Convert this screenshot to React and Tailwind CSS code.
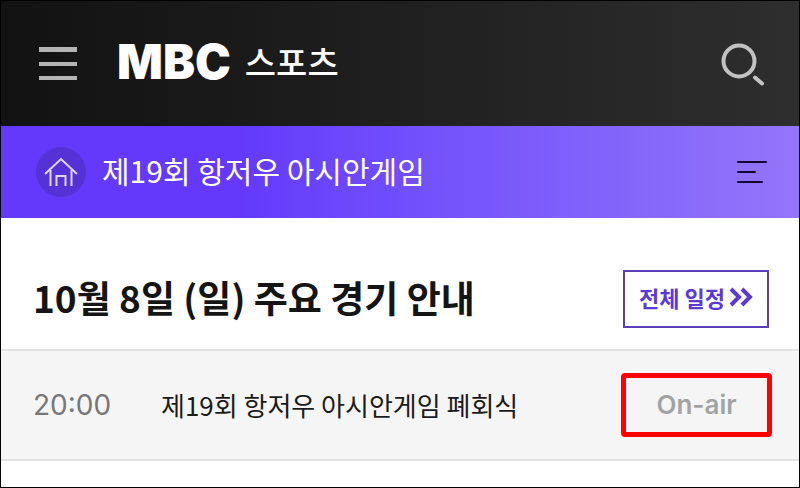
const matches = [
  { time: '20:00', title: '제19회 항저우 아시안게임 폐회식', status: 'On-air' },
]

function Header() {
  return (
    <header className="flex h-[125px] items-center bg-linear-to-r from-[#121212] to-[#2e2e2e] pl-[38px] pr-[34px]">
      <button type="button" aria-label="메뉴" className="flex flex-col gap-[10px]">
        <span className="h-[5px] w-[38px] bg-[#b4b4b4]" />
        <span className="h-[4px] w-[38px] bg-[#b4b4b4]" />
        <span className="h-[4px] w-[38px] bg-[#b4b4b4]" />
      </button>
      <a href="#" className="ml-10 flex items-center gap-[14px] pb-1 text-white">
        <span className="font-[Inter,sans-serif] text-[48px] leading-[48px] font-black">MBC</span>
        <span className="text-[34px] leading-[48px] font-medium">스포츠</span>
      </a>
      <button type="button" aria-label="검색" className="ml-auto">
        <svg width="44" height="44" viewBox="0 0 44 44" fill="none" stroke="#c2c2c2" strokeLinecap="round">
          <circle cx="18" cy="19" r="15.500" strokeWidth="4" />
          <path d="M34 35.500 L41 41.500" strokeWidth="4" />
        </svg>
      </button>
    </header>
  )
}

function EventBar() {
  return (
    <nav className="flex h-[92px] items-center bg-linear-to-r from-[#6439fb] from-30% to-[#9475fa] pl-[35px] pr-8">
      <a href="#" aria-label="홈" className="flex size-[50px] items-center justify-center rounded-full bg-[#5631d6]">
        <svg width="34" height="32" viewBox="0 0 34 32" fill="none" stroke="#e0d6fb" strokeWidth="2">
          <path d="M1 18 L17 3 L33 18" />
          <path d="M6.500 14 V30 M27.500 14 V30" />
          <path d="M12.500 30 V20 H21.500 V30" />
        </svg>
      </a>
      <h1 className="ml-4 pb-1 text-[30px] leading-[44px] text-white">제19회 항저우 아시안게임</h1>
      <button type="button" aria-label="목록" className="ml-auto">
        <svg width="30" height="24" viewBox="0 0 30 24" stroke="#12082f" strokeWidth="2" strokeLinecap="round">
          <path d="M1 2 H29 M1 12 H18 M1 22 H25" />
        </svg>
      </button>
    </nav>
  )
}

export default function App() {
  return (
    <div className="min-h-screen border border-black bg-white font-['Noto_Sans_CJK_KR',sans-serif]">
      <Header />
      <EventBar />
      <main>
        <div className="flex h-[131px] items-center justify-between pl-8 pr-[30px] pt-[30px]">
          <h2 className="pb-1 text-[37px] leading-[52px] font-bold text-[#151515]">10월 8일 (일) 주요 경기 안내</h2>
          <button
            type="button"
            className="flex h-[58px] w-[146px] items-center justify-center gap-1 border-2 border-[#5a3fb8] pb-1 text-[22px] leading-8 font-bold text-[#5b38d8]"
          >
            전체 일정
            <svg width="24" height="20" viewBox="0 0 24 20" fill="none" stroke="#5b38d8" strokeWidth="4">
              <path d="M2 2 L10 10 L2 18 M13 2 L21 10 L13 18" />
            </svg>
          </button>
        </div>
        <ul>
          {matches.map((match) => (
            <li
              key={match.title}
              className="flex h-[112px] items-center border-y-2 border-[#e2e2e2] bg-[#f5f5f5] pl-8 pr-[27px]"
            >
              <span className="w-[128px] font-[Inter,sans-serif] text-[28px] leading-10 text-[#777777]">
                {match.time}
              </span>
              <span className="text-[26px] leading-10 text-[#1b1b1b]">{match.title}</span>
              <span className="ml-auto flex h-16 w-[151px] items-center justify-center rounded-sm border-[5px] border-[#ff0000] font-[Inter,sans-serif] text-[26px] leading-10 font-semibold text-[#a3a3a3]">
                {match.status}
              </span>
            </li>
          ))}
        </ul>
      </main>
    </div>
  )
}
